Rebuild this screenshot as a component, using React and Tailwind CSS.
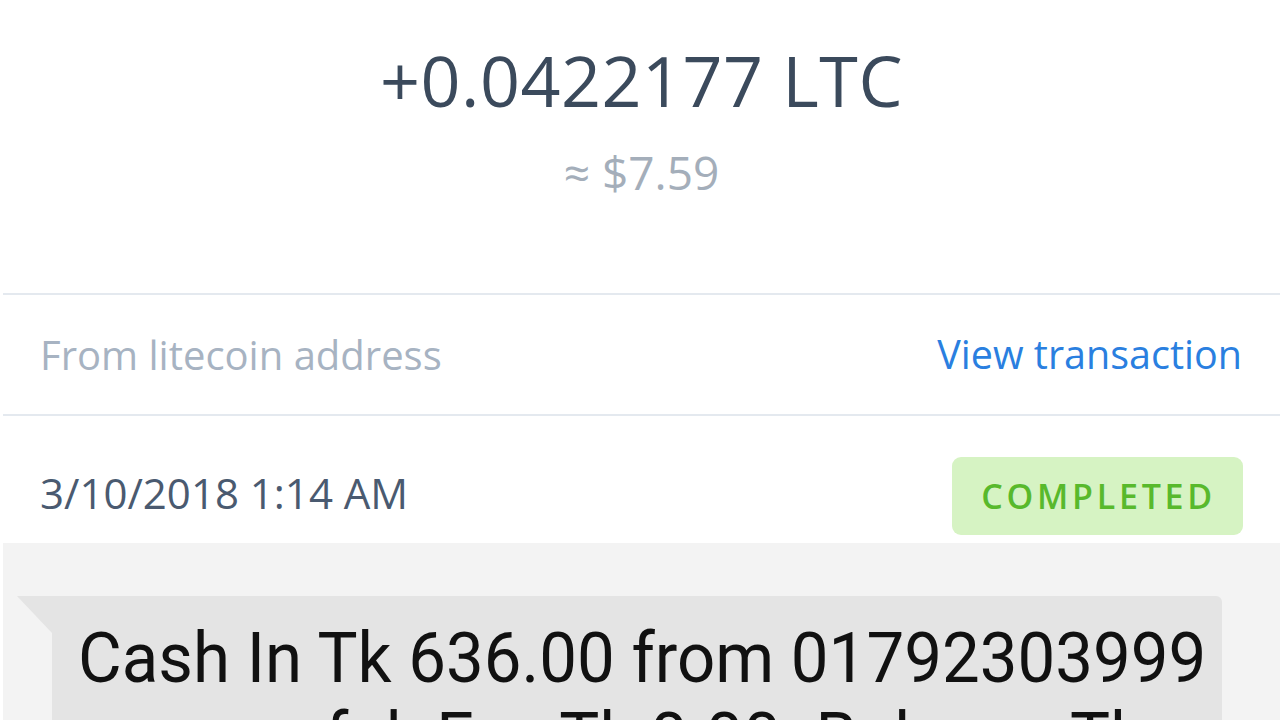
import React from 'react';

const TxHeader = ({ amount, fiat }) => (
  <div className="flex flex-col items-center shrink-0 h-[293px] pt-[45px]">
    <div className="text-[70px] leading-none text-[#3b4a5c] tracking-[0.5px]">{amount}</div>
    <div className="mt-[34px] text-[46px] leading-none text-[#a4aeba]">{fiat}</div>
  </div>
);

const Divider = () => <div className="shrink-0 h-[2px] bg-[#e4e9ef]" />;

const SmsBubble = ({ lines }) => (
  <div className="flex bg-[#f3f3f3] pt-[53px] pl-[14px] pr-[58px] flex-1">
    <svg width="35" height="37" viewBox="0 0 35 37" className="shrink-0">
      <path d="M0 0 L35 0 L35 37 Z" fill="#e4e4e4" />
    </svg>
    <div className="flex-1 bg-[#e4e4e4] rounded-tr-[6px] pt-[22px] pl-[26px] overflow-hidden">
      {lines.map((line, i) => (
        <div
          key={i}
          className="text-[70px] leading-[80px] text-[#111] whitespace-nowrap origin-left scale-x-[0.96]"
          style={{ fontFamily: 'Roboto, "Liberation Sans", sans-serif' }}
        >
          {line}
        </div>
      ))}
    </div>
  </div>
);

export default function App() {
  return (
    <div
      className="w-[1280px] h-[720px] overflow-hidden bg-white pl-[3px] flex flex-col"
      style={{ fontFamily: '"Open Sans", "Liberation Sans", sans-serif' }}
    >
      <TxHeader amount="+0.0422177 LTC" fiat="≈ $7.59" />
      <Divider />
      <div className="flex shrink-0 items-center justify-between h-[119px] pl-[37px] pr-[38px]">
        <span className="text-[40px] text-[#a7b3c2]">From litecoin address</span>
        <a className="text-[39.5px] text-[#2a7fe0]">View transaction</a>
      </div>
      <Divider />
      <div className="flex shrink-0 items-center justify-between pt-[41px] pb-[8px] pl-[37px] pr-[37px]">
        <span className="text-[42px] text-[#4a5a70] -mt-[8px]">3/10/2018 1:14 AM</span>
        <span className="h-[78px] flex items-center pl-[29px] pr-[27px] rounded-[9px] bg-[#d6f3c3] text-[34px] font-semibold tracking-[0.11em] text-[#58b92c]">
          COMPLETED
        </span>
      </div>
      <SmsBubble
        lines={[
          'Cash In Tk 636.00 from 01792303999',
          'successful. Fee Tk 0.00. Balance Tk',
          '1,283.45. TrxID 5C9K2R7LQ 10/03/2018',
        ]}
      />
    </div>
  );
}
